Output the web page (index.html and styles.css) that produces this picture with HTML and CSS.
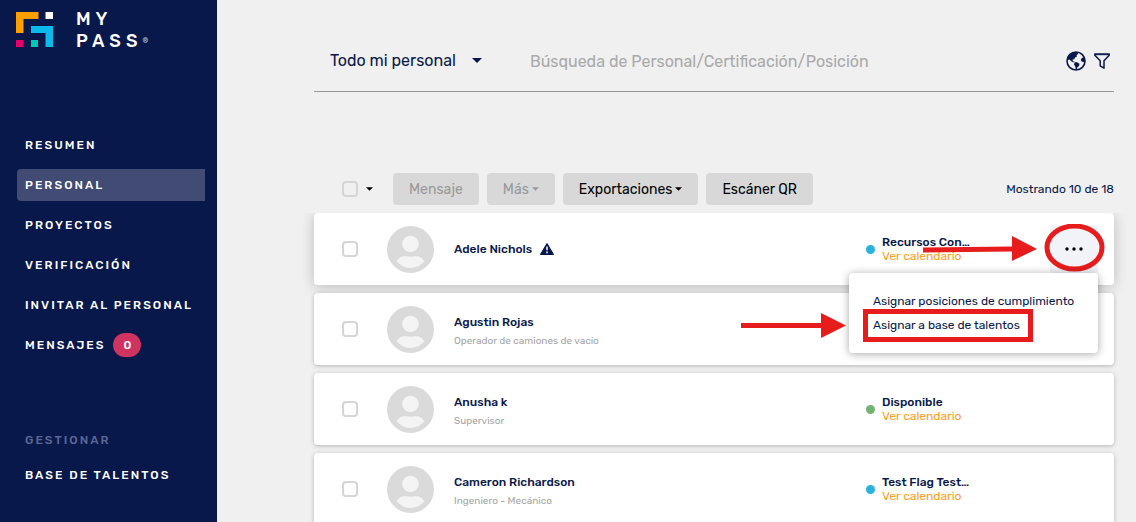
FILE: index.html
```html
<!DOCTYPE html>
<html lang="es">
  <head>
    <meta charset="UTF-8" />
    <meta name="viewport" content="width=device-width, initial-scale=1.0" />
    <title>My Pass - Personal</title>
    <link rel="stylesheet" href="styles.css" />
  </head>
  <body>
    <!-- shared icons -->
    <svg class="sprite" aria-hidden="true">
      <symbol id="avatar" viewBox="0 0 46 46">
        <circle cx="23" cy="23" r="23" fill="#dadada" />
        <circle cx="23" cy="17.500" r="8" fill="#f4f4f4" />
        <path d="M9.500 34.500C12 30.500 15 29.200 18.500 29.700C21.500 30.100 24.500 30.100 27.500 29.700C31 29.200 34 30.500 36.500 34.500C33 38.700 28.500 41 23 41S13 38.700 9.500 34.500Z" fill="#f4f4f4" />
      </symbol>
      <symbol id="caret" viewBox="0 0 8 4">
        <path d="M0 0H8L4 4Z" fill="currentColor" />
      </symbol>
      <symbol id="dots" viewBox="0 0 18 4">
        <circle cx="2" cy="2" r="1.700" />
        <circle cx="9" cy="2" r="1.700" />
        <circle cx="16" cy="2" r="1.700" />
      </symbol>
    </svg>

    <div class="app">
      <aside class="sidebar">
        <a class="logo" href="#">
          <svg class="logo-mark" width="37" height="35" viewBox="0 0 37 35">
            <path d="M0 0H22.500V7H7.500V21H0Z" fill="#ffa000" />
            <path d="M29.500 0H37V7H29.500Z" fill="#fff" />
            <path d="M15 14H37V35H29.500V21H15Z" fill="#0cb9ec" />
            <path d="M0 28H7.500V35H0Z" fill="#e5006d" />
            <path d="M15 28H22V35H15Z" fill="#00c8b4" />
          </svg>
          <div class="logo-text">
            <div>MY</div>
            <div>PASS<small>®</small></div>
          </div>
        </a>

        <nav class="nav">
          <a class="nav-link" href="#">Resumen</a>
          <a class="nav-link active" href="#">Personal</a>
          <a class="nav-link" href="#">Proyectos</a>
          <a class="nav-link" href="#">Verificación</a>
          <a class="nav-link" href="#">Invitar al personal</a>
          <a class="nav-link" href="#">Mensajes <span class="badge">0</span></a>
        </nav>

        <nav class="manage">
          <h2 class="nav-title">Gestionar</h2>
          <a class="nav-link" href="#">Base de talentos</a>
        </nav>
      </aside>

      <main class="main">
        <header class="search-bar">
          <div class="filter">
            <select class="filter-select" aria-label="Filtro de personal">
              <option>Todo mi personal</option>
            </select>
            <svg class="filter-caret" width="10" height="5"><use href="#caret" /></svg>
          </div>
          <input class="search" type="search" aria-label="Búsqueda" placeholder="Búsqueda de Personal/Certificación/Posición" />
          <button class="icon-btn" aria-label="Ubicación">
            <svg width="20" height="20" viewBox="0 0 20 20">
              <circle cx="10" cy="10" r="9" fill="none" stroke="#09184a" stroke-width="1.600" />
              <path d="M3 4.500L7 1.500L11.500 1.200L12.300 3L10.500 4L11 5.500L9 6.500L8.300 8.300L6.500 8.500L7 10.200L8.700 10.800L8 11.500L5.500 10.500L3.500 8.500L2 9L1.300 7.500Z" fill="#09184a" />
              <path d="M8.500 11.500L10.500 11L13.500 12.800L13 15L11.200 16.500L10.800 19H9.800L9.300 15.500L8 13.500Z" fill="#09184a" />
              <path d="M18.500 6.500L16 6.800L14.800 8.800L15.500 10.500L17.500 11L18.900 12Z" fill="#09184a" />
            </svg>
          </button>
          <button class="icon-btn" aria-label="Filtrar">
            <svg width="16" height="16" viewBox="0 0 16 16">
              <path d="M0.800 0.900H15.200V2.300L10 7.800V15.200L6.200 12.800V7.800L0.800 2.300Z" fill="none" stroke="#09184a" stroke-width="1.500" stroke-linejoin="round" />
              <path d="M1 1.700H15" stroke="#09184a" stroke-width="1" />
            </svg>
          </button>
        </header>

        <div class="toolbar">
          <input class="check" type="checkbox" aria-label="Seleccionar todo" />
          <button class="caret-btn" aria-label="Opciones de selección">
            <svg width="7" height="4"><use href="#caret" /></svg>
          </button>
          <button class="btn" disabled>Mensaje</button>
          <button class="btn" disabled>Más <svg width="7" height="4"><use href="#caret" /></svg></button>
          <button class="btn">Exportaciones <svg width="7" height="4"><use href="#caret" /></svg></button>
          <button class="btn">Escáner QR</button>
          <span class="count">Mostrando 10 de 18</span>
        </div>

        <div class="list">
          <article class="card open">
            <input class="check" type="checkbox" aria-label="Adele Nichols" />
            <svg class="avatar"><use href="#avatar" /></svg>
            <div class="person">
              <div class="name">
                Adele Nichols
                <svg width="14" height="12" viewBox="0 0 14 12">
                  <path d="M7 0.700L13.300 11.300H0.700Z" fill="#09184a" stroke="#09184a" stroke-width="1.200" stroke-linejoin="round" />
                  <path d="M7 3.500V7.300M7 8.600V10.200" stroke="#fff" stroke-width="1.500" />
                </svg>
              </div>
            </div>
            <div class="status">
              <span class="dot busy"></span>
              <div class="status-text">
                <div class="status-name">Recursos Con…</div>
                <a class="calendar" href="#">Ver calendario</a>
              </div>
            </div>
            <button class="more" aria-label="Más acciones">
              <svg width="18" height="4"><use href="#dots" /></svg>
            </button>
            <svg class="mark" width="184" height="50" viewBox="0 0 184 50">
              <path d="M0 23.500L89 22.500V12L114 25L89 37V27.500L0 28.500Z" fill="#e71d1d" />
              <ellipse cx="151.500" cy="23.500" rx="27.500" ry="21.500" fill="none" stroke="#e71d1d" stroke-width="5" />
            </svg>

            <div class="menu">
              <a class="menu-item" href="#">Asignar posiciones de cumplimiento</a>
              <a class="menu-item marked" href="#">Asignar a base de talentos</a>
              <svg class="menu-mark" width="106" height="26" viewBox="0 0 106 26">
                <path d="M0 11H80V1L105 13.500L80 26V16H0Z" fill="#e71d1d" />
              </svg>
            </div>
          </article>

          <article class="card">
            <input class="check" type="checkbox" aria-label="Agustin Rojas" />
            <svg class="avatar"><use href="#avatar" /></svg>
            <div class="person">
              <div class="name">Agustin Rojas</div>
              <div class="role">Operador de camiones de vacío</div>
            </div>
          </article>

          <article class="card">
            <input class="check" type="checkbox" aria-label="Anusha k" />
            <svg class="avatar"><use href="#avatar" /></svg>
            <div class="person">
              <div class="name">Anusha k</div>
              <div class="role">Supervisor</div>
            </div>
            <div class="status">
              <span class="dot free"></span>
              <div class="status-text">
                <div class="status-name">Disponible</div>
                <a class="calendar" href="#">Ver calendario</a>
              </div>
            </div>
            <button class="more" aria-label="Más acciones">
              <svg width="18" height="4"><use href="#dots" /></svg>
            </button>
          </article>

          <article class="card">
            <input class="check" type="checkbox" aria-label="Cameron Richardson" />
            <svg class="avatar"><use href="#avatar" /></svg>
            <div class="person">
              <div class="name">Cameron Richardson</div>
              <div class="role">Ingeniero - Mecánico</div>
            </div>
            <div class="status">
              <span class="dot busy"></span>
              <div class="status-text">
                <div class="status-name">Test Flag Test…</div>
                <a class="calendar" href="#">Ver calendario</a>
              </div>
            </div>
            <button class="more" aria-label="Más acciones">
              <svg width="18" height="4"><use href="#dots" /></svg>
            </button>
          </article>
        </div>
      </main>
    </div>
  </body>
</html>
```

FILE: styles.css
```css
* {
  margin: 0;
  padding: 0;
  box-sizing: border-box;
}

body {
  height: 100vh;
  overflow: hidden;
  background-color: #f0f0f0;
  color: #09184a;
  font-family: Rubik, Roboto, sans-serif;
  font-size: 12px;
}

a {
  color: inherit;
  text-decoration: none;
}

button,
input,
select {
  border: none;
  background: none;
  color: inherit;
  font: inherit;
}

button {
  cursor: pointer;
}

svg {
  flex: none;
}

.sprite {
  position: absolute;
  width: 0;
  height: 0;
}

.app {
  display: flex;
  height: 100vh;
}

/* sidebar */
.sidebar {
  flex: 0 0 217px;
  padding: 9px 12px 0 17px;
  background-color: #09184a;
  color: #fff;
}

.logo {
  display: flex;
  gap: 23px;
  height: 40px;
}

.logo-mark {
  margin-top: 3px;
  margin-left: -1px;
}

.logo-text {
  font-size: 18px;
  font-weight: 500;
  line-height: 21px;
  letter-spacing: 5px;
}

.logo-text small {
  font-size: 7px;
  vertical-align: 4px;
  opacity: 0.7;
}

.nav {
  display: flex;
  flex-direction: column;
  gap: 8px;
  margin-top: 80px;
}

.nav-link,
.nav-title {
  display: flex;
  align-items: center;
  gap: 8px;
  height: 32px;
  padding-left: 8px;
  font-size: 12px;
  font-weight: 500;
  letter-spacing: 2px;
  text-transform: uppercase;
  white-space: nowrap;
}

.nav-link.active {
  border-radius: 4px 0 0 4px;
  background-color: #414b73;
}

.badge {
  width: 28px;
  padding-left: 2px;
  border-radius: 12px;
  background-color: #d03360;
  line-height: 24px;
  text-align: center;
}

.manage {
  margin-top: 63px;
}

.nav-title {
  margin-bottom: 3px;
  color: #5c6796;
}

/* search bar */
.main {
  flex: 1;
  min-width: 0;
  padding: 30px 22px 0 97px;
}

.search-bar {
  display: flex;
  align-items: center;
  height: 62px;
  padding: 0 4px 0 16px;
  border-bottom: 1px solid #98989c;
  font-size: 16px;
}

.filter {
  display: flex;
  align-items: center;
  width: 200px;
}

.filter-select {
  width: 152px;
  margin-right: -10px;
  appearance: none;
}

.filter-caret {
  pointer-events: none;
}

.search {
  flex: 1;
  min-width: 0;
  padding-top: 2px;
  outline: none;
}

.search::placeholder {
  color: #a9a9a9;
}

.icon-btn {
  display: flex;
  margin-left: 8px;
}

/* toolbar */
.toolbar {
  display: flex;
  align-items: center;
  gap: 8px;
  margin-top: 81px;
  padding-left: 28px;
}

.check {
  flex: none;
  width: 16px;
  height: 16px;
  border: 2px solid #d5d5d5;
  border-radius: 4px;
  appearance: none;
}

.caret-btn {
  display: flex;
  margin-right: 12px;
  color: #000;
}

.btn {
  display: flex;
  align-items: center;
  gap: 3px;
  height: 32px;
  padding: 0 16px;
  border-radius: 4px;
  background-color: #d8d8d8;
  color: #000;
  font-size: 14px;
}

.btn:disabled {
  color: #999;
  cursor: default;
}

.count {
  margin-left: auto;
}

/* personnel list */
.list {
  display: flex;
  flex-direction: column;
  gap: 8px;
  height: calc(100vh - 213px);
  margin: 8px -12px 0;
  padding: 0 12px;
  overflow: hidden;
}

.card {
  display: flex;
  position: relative;
  flex: none;
  align-items: center;
  height: 72px;
  padding: 0 16px 0 28px;
  border-radius: 4px;
  background-color: #fff;
  box-shadow: 0 1px 4px rgba(0, 0, 0, 0.25);
}

.card.open {
  box-shadow: 0 2px 14px rgba(0, 0, 0, 0.22);
}

.avatar {
  width: 47px;
  height: 47px;
  margin: 0 20px 0 29px;
}

.person {
  flex: 1;
  min-width: 0;
}

.name {
  display: flex;
  align-items: center;
  gap: 8px;
  font-weight: 500;
  line-height: 20px;
}

.role {
  padding-top: 3px;
  color: #a5a5a5;
  font-size: 10px;
  line-height: 12px;
}

.status {
  display: flex;
  align-items: center;
  gap: 7px;
  width: 184px;
  line-height: 14px;
}

.dot {
  width: 9px;
  height: 9px;
  border-radius: 50%;
}

.busy {
  background-color: #27b3dd;
}

.free {
  background-color: #72b572;
}

.status-name {
  font-weight: 500;
}

.calendar {
  display: block;
  color: #ffa01c;
}

.more {
  display: flex;
  align-items: center;
  justify-content: center;
  visibility: hidden;
  width: 48px;
  height: 48px;
  border-radius: 4px;
  background-color: #f2f3f8;
}

.card:hover .more,
.open .more {
  visibility: visible;
}

/* dropdown and the red marks over it */
.menu {
  position: absolute;
  z-index: 1;
  top: 60px;
  right: 16px;
  width: 249px;
  padding: 16px 14px 11px;
  border-radius: 4px;
  background-color: #fff;
  box-shadow: 0 1px 8px rgba(0, 0, 0, 0.35);
}

.menu-item {
  display: block;
  padding-left: 10px;
  line-height: 24px;
  white-space: nowrap;
}

.menu-item.marked {
  width: 170px;
  margin-top: -4px;
  padding: 0 5px;
  border: 5px solid #e71d1d;
  line-height: 23px;
}

.mark {
  position: absolute;
  top: 11px;
  right: 7px;
}

.menu-mark {
  position: absolute;
  top: 39px;
  right: 251px;
}
```
